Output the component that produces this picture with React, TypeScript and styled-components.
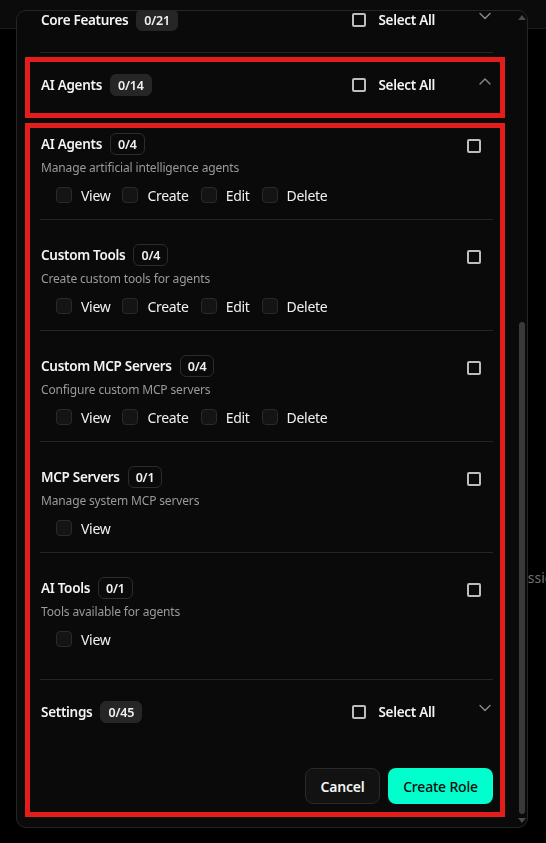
import React, { useLayoutEffect, useRef } from "react";
import styled, { createGlobalStyle } from "styled-components";

const GlobalStyle = createGlobalStyle`
  html, body {
    margin: 0;
    padding: 0;
    background: #000;
    font-family: "Noto Sans", "Open Sans", sans-serif;
    color: #f2f2f2;
  }
  * { box-sizing: border-box; }
`;

type Perm = "View" | "Create" | "Edit" | "Delete";

const agentItems: { title: string; count: string; desc: string; perms: Perm[] }[] = [
  { title: "AI Agents", count: "0/4", desc: "Manage artificial intelligence agents", perms: ["View", "Create", "Edit", "Delete"] },
  { title: "Custom Tools", count: "0/4", desc: "Create custom tools for agents", perms: ["View", "Create", "Edit", "Delete"] },
  { title: "Custom MCP Servers", count: "0/4", desc: "Configure custom MCP servers", perms: ["View", "Create", "Edit", "Delete"] },
  { title: "MCP Servers", count: "0/1", desc: "Manage system MCP servers", perms: ["View"] },
  { title: "AI Tools", count: "0/1", desc: "Tools available for agents", perms: ["View"] },
];

const Chevron = ({ up }: { up?: boolean }) => (
  <svg width="12" height="8" viewBox="0 0 12 8" fill="none">
    <polyline
      points={up ? "1,7 6,2 11,7" : "1,1.5 6,6.5 11,1.5"}
      stroke="#8a8a8a"
      strokeWidth="1.4"
      strokeLinecap="round"
      strokeLinejoin="round"
    />
  </svg>
);

const App: React.FC = () => {
  const scrollRef = useRef<HTMLDivElement>(null);

  useLayoutEffect(() => {
    // the form is scrolled down to the permission list
    if (scrollRef.current) scrollRef.current.scrollTop = scrollRef.current.scrollHeight;
  }, []);

  return (
    <>
      <GlobalStyle />
      {/* page behind the dialog */}
      <Page>
        <TopBar />
        <PageBody>
          <FadedText>Permissions</FadedText>
        </PageBody>
      </Page>

      <Overlay>
        <Modal>
          <ScrollArea ref={scrollRef}>
            {/* Core Features group (collapsed) */}
            <Group $divided>
              <GroupHeader>
                <Title>Core Features</Title>
                <Badge $filled>0/21</Badge>
                <Spacer />
                <SelectAll>
                  <LightBox />
                  Select All
                </SelectAll>
                <ChevronSlot>
                  <Chevron />
                </ChevronSlot>
              </GroupHeader>
            </Group>

            {/* AI Agents group (expanded) */}
            <Highlight $gapTop={4}>
              <GroupHeader $tight>
                <Title>AI Agents</Title>
                <Badge $filled>0/14</Badge>
                <Spacer />
                <SelectAll>
                  <LightBox />
                  Select All
                </SelectAll>
                <ChevronSlot>
                  <Chevron up />
                </ChevronSlot>
              </GroupHeader>
            </Highlight>

            <Highlight $gapTop={5} $last>
              <GroupContent>
                {agentItems.map((item) => (
                  <Item key={item.title}>
                    <ItemTop>
                      <Title>{item.title}</Title>
                      <Badge>{item.count}</Badge>
                      <Spacer />
                      <ItemCheck>
                        <LightBox />
                      </ItemCheck>
                    </ItemTop>
                    <Desc>{item.desc}</Desc>
                    <PermRow>
                      {item.perms.map((p) => (
                        <Perm key={p}>
                          <DarkBox />
                          {p}
                        </Perm>
                      ))}
                    </PermRow>
                  </Item>
                ))}
              </GroupContent>

              {/* Settings group (collapsed) */}
              <GroupHeader>
                <Title>Settings</Title>
                <Badge $filled>0/45</Badge>
                <Spacer />
                <SelectAll>
                  <LightBox />
                  Select All
                </SelectAll>
                <ChevronSlot>
                  <Chevron />
                </ChevronSlot>
              </GroupHeader>

              <Footer>
                <CancelButton>Cancel</CancelButton>
                <PrimaryButton>Create Role</PrimaryButton>
              </Footer>
            </Highlight>
          </ScrollArea>

          <Scrollbar>
            <Arrow />
            <Track>
              <Thumb />
            </Track>
            <Arrow $down />
          </Scrollbar>
        </Modal>
      </Overlay>
    </>
  );
};

export default App;

const Page = styled.div`
  min-height: 843px;
  background: #000;
`;

const TopBar = styled.div`
  height: 29px;
  background: #0b0b0b;
  border-bottom: 1px solid #1c1c1c;
`;

const PageBody = styled.div`
  padding: 539px 0 0 489px;
`;

const FadedText = styled.div`
  font-size: 14px;
  color: #707070;
  white-space: nowrap;
`;

const Overlay = styled.div`
  position: fixed;
  inset: 0;
  display: flex;
  align-items: flex-start;
  padding: 10px 0 0 16px;
`;

const Modal = styled.div`
  position: relative;
  width: 512px;
  height: 818px;
  background: #0a0a0a;
  border: 1px solid #262626;
  border-radius: 10px;
  overflow: hidden;
`;

const ScrollArea = styled.div`
  height: 100%;
  overflow-y: auto;
  scrollbar-width: none;
  padding: 0 34px 10px 23px;
  &::-webkit-scrollbar {
    display: none;
  }
`;

const Group = styled.div<{ $divided?: boolean }>`
  border-bottom: ${({ $divided }) => ($divided ? "1px solid #262626" : "none")};
`;

const Highlight = styled.div<{ $gapTop: number; $last?: boolean }>`
  margin: ${({ $gapTop }) => $gapTop}px -12px 0 -15px;
  padding: 0 7px ${({ $last }) => ($last ? 8 : 0)}px 10px;
  border: 5px solid #e31c1c;
`;

const GroupHeader = styled.div<{ $tight?: boolean }>`
  display: flex;
  align-items: center;
  height: ${({ $tight }) => ($tight ? 51 : 64)}px;
  padding: ${({ $tight }) => ($tight ? "11px 0 16px" : "20px 0 20px")};
  padding-left: 1px;
`;

const Title = styled.span`
  font-size: 13.5px;
  font-weight: 600;
  color: #f4f4f4;
  letter-spacing: -0.3px;
  white-space: nowrap;
`;

const Badge = styled.span<{ $filled?: boolean }>`
  display: inline-flex;
  align-items: center;
  height: 22px;
  margin-left: 8px;
  padding: 0 7px;
  border-radius: 6px;
  font-size: 12.5px;
  font-weight: 600;
  color: #f0f0f0;
  letter-spacing: -0.2px;
  background: ${({ $filled }) => ($filled ? "#262626" : "transparent")};
  border: 1px solid ${({ $filled }) => ($filled ? "#262626" : "#2c2c2c")};
`;

const Spacer = styled.span`
  flex: 1;
`;

const SelectAll = styled.label`
  display: flex;
  align-items: center;
  gap: 12px;
  font-size: 13.5px;
  font-weight: 600;
  color: #f4f4f4;
  letter-spacing: -0.3px;
`;

const LightBox = styled.span`
  display: inline-block;
  width: 14px;
  height: 14px;
  border: 2px solid #bdbdbd;
  border-radius: 2px;
`;

const ChevronSlot = styled.span`
  display: flex;
  align-self: flex-start;
  margin: 2px 2px 0 44px;
  height: 12px;
  align-items: center;
`;

const GroupContent = styled.div`
  padding-bottom: 16px;
  border-bottom: 1px solid #262626;
`;

const Item = styled.div`
  padding: 24px 0 14px;
  border-bottom: 1px solid #262626;
  &:first-child {
    padding-top: 5px;
  }
  &:last-child {
    border-bottom: none;
  }
`;

const ItemTop = styled.div`
  display: flex;
  align-items: center;
  height: 22px;
  padding-left: 1px;
`;

const ItemCheck = styled.span`
  display: flex;
  margin: 4px 12px 0 0;
`;

const Desc = styled.div`
  margin-top: 5px;
  height: 16px;
  line-height: 16px;
  padding-left: 1px;
  font-size: 12px;
  color: #9a9a9a;
  letter-spacing: -0.15px;
`;

const PermRow = styled.div`
  display: flex;
  align-items: center;
  gap: 12px;
  height: 20px;
  margin-top: 9px;
  padding-left: 16px;
`;

const Perm = styled.label`
  display: flex;
  align-items: center;
  gap: 9px;
  font-size: 14px;
  color: #f0f0f0;
  letter-spacing: -0.3px;
`;

const DarkBox = styled.span`
  display: inline-block;
  width: 16px;
  height: 16px;
  background: #141414;
  border: 1px solid #2a2a2a;
  border-radius: 4px;
`;

const Footer = styled.div`
  display: flex;
  justify-content: flex-end;
  gap: 8px;
  margin-top: 24px;
`;

const ButtonBase = styled.button`
  height: 36px;
  border-radius: 8px;
  font-family: inherit;
  font-size: 14px;
  letter-spacing: -0.2px;
  cursor: pointer;
`;

const CancelButton = styled(ButtonBase)`
  width: 75px;
  background: #121212;
  border: 1px solid #2a2a2a;
  color: #f4f4f4;
  font-weight: 600;
`;

const PrimaryButton = styled(ButtonBase)`
  width: 105px;
  background: #00ffcc;
  border: none;
  color: #0b0b0b;
  font-weight: 500;
`;

const Scrollbar = styled.div`
  position: absolute;
  top: 2px;
  right: 1px;
  bottom: 2px;
  width: 8px;
  display: flex;
  flex-direction: column;
  align-items: center;
`;

const Arrow = styled.span<{ $down?: boolean }>`
  width: 0;
  height: 0;
  margin: 2px 0;
  border-left: 4px solid transparent;
  border-right: 4px solid transparent;
  ${({ $down }) =>
    $down ? "border-top: 5px solid #4a4a4a;" : "border-bottom: 5px solid #4a4a4a;"}
`;

const Track = styled.div`
  flex: 1;
  width: 100%;
  display: flex;
  flex-direction: column;
  justify-content: flex-end;
  padding: 0 1px 2px;
`;

const Thumb = styled.div`
  height: 492px;
  border-radius: 4px;
  background: #3a3a3a;
`;
